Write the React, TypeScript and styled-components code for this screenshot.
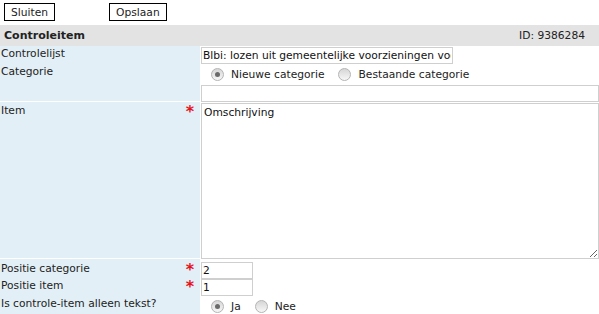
import React from 'react';
import styled, { createGlobalStyle } from 'styled-components';

const GlobalStyle = createGlobalStyle`
  body {
    margin: 0;
    background: #fff;
    font-family: "DejaVu Sans", Verdana, sans-serif;
    font-size: 10.7px;
    color: #222;
  }
`;

const Toolbar = styled.div`
  display: flex;
  gap: 54px;
  padding: 3px 4px 4px;
`;

const ToolButton = styled.button`
  height: 18px;
  padding: 0 6px;
  border: 1px solid #000;
  background: #fff;
  font: inherit;
  color: #222;
`;

const Header = styled.div`
  display: flex;
  align-items: center;
  justify-content: space-between;
  height: 21px;
  padding: 0 14px 0 4px;
  background: #e3e3e3;

  & h3 {
    margin: 0;
    font-size: 11px;
    font-weight: bold;
  }
`;

const Form = styled.div`
  display: grid;
  grid-template-columns: 200px 1fr;
`;

const Label = styled.div<{ $h: number; $pt: number }>`
  display: flex;
  justify-content: space-between;
  height: ${p => p.$h}px;
  padding: ${p => p.$pt}px 6px 0 1px;
  box-sizing: border-box;
  background: #e2eff6;
  white-space: nowrap;
`;

const Star = styled.span`
  color: #e8101a;
  font-size: 16px;
  font-weight: bold;
  line-height: 10px;
  height: 10px;
  margin-top: 3px;
`;

const Field = styled.div<{ $pt?: number }>`
  display: flex;
  align-items: flex-start;
  padding: ${p => p.$pt ?? 0}px 0 0 1px;
  min-width: 0;
`;

const TextInput = styled.input<{ $w?: number }>`
  box-sizing: border-box;
  width: ${p => (p.$w ? `${p.$w}px` : '100%')};
  height: 17px;
  padding: 0 1px;
  border: 1px solid #cfcfcf;
  font: inherit;
  color: #111;
  outline: none;
`;

const TextArea = styled.textarea`
  box-sizing: border-box;
  width: 100%;
  height: 156px;
  padding: 2px 2px;
  border: 1px solid #cfcfcf;
  font: inherit;
  color: #111;
  outline: none;
`;

const Choices = styled.div<{ $gap: number }>`
  display: flex;
  align-items: center;
  gap: ${p => p.$gap}px;
  height: 100%;
  padding-left: 10px;
`;

const Choice = styled.label`
  display: flex;
  align-items: center;
  gap: 7px;
`;

const Radio = styled.span<{ $on?: boolean }>`
  position: relative;
  width: 11px;
  height: 11px;
  border: 1px solid #b4b4b4;
  border-radius: 50%;
  background: linear-gradient(#d6d6d6, #f7f7f7);

  &::after {
    content: '';
    display: ${p => (p.$on ? 'block' : 'none')};
    position: absolute;
    left: 3px;
    top: 3px;
    width: 5px;
    height: 5px;
    border-radius: 50%;
    background: #6a6a6a;
  }
`;

const Row = ({
  label,
  h,
  pt,
  req,
  children,
  fpt
}: {
  label: string;
  h: number;
  pt: number;
  req?: boolean;
  fpt?: number;
  children: React.ReactNode;
}) => (
  <>
    <Label $h={h} $pt={pt}>
      <span>{label}</span>
      {req && <Star>*</Star>}
    </Label>
    <Field $pt={fpt}>{children}</Field>
  </>
);

export default () => {
  return (
    <>
      <GlobalStyle />
      <Toolbar>
        <ToolButton>Sluiten</ToolButton>
        <ToolButton>Opslaan</ToolButton>
      </Toolbar>
      <Header>
        <h3>Controleitem</h3>
        <span>ID: 9386284</span>
      </Header>
      <Form>
        <Row label="Controlelijst" h={18} pt={1} fpt={1}>
          <TextInput
            $w={252}
            readOnly
            value="Blbi: lozen uit gemeentelijke voorzieningen voor afvalwater"
          />
        </Row>
        <Row label="Categorie" h={20} pt={1}>
          <Choices $gap={14}>
            <Choice>
              <Radio $on />
              Nieuwe categorie
            </Choice>
            <Choice>
              <Radio />
              Bestaande categorie
            </Choice>
          </Choices>
        </Row>
        <Row label="" h={17} pt={0} fpt={1}>
          <TextInput readOnly value="" />
        </Row>
        <Row label="Item" h={156} pt={2} req fpt={1}>
          <TextArea readOnly value="Omschrijving" />
        </Row>
        <Row label="Positie categorie" h={20} pt={3} req fpt={3}>
          <TextInput $w={52} readOnly value="2" />
        </Row>
        <Row label="Positie item" h={17} pt={0} req>
          <TextInput $w={52} readOnly value="1" />
        </Row>
        <Row label="Is controle-item alleen tekst?" h={20} pt={1}>
          <Choices $gap={14}>
            <Choice>
              <Radio $on />
              Ja
            </Choice>
            <Choice>
              <Radio />
              Nee
            </Choice>
          </Choices>
        </Row>
      </Form>
    </>
  );
};
